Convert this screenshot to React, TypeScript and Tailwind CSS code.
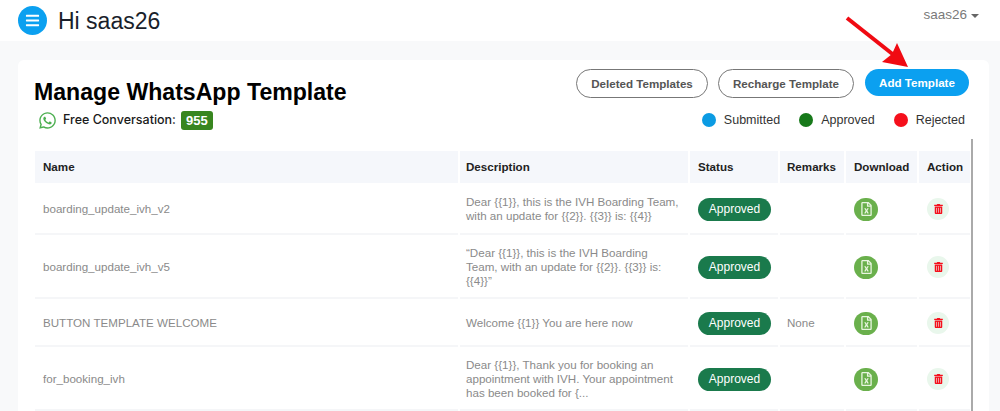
import React from 'react';
import { FaBars, FaRegFileExcel, FaTrashAlt, FaWhatsapp } from 'react-icons/fa';

const rows = [
    {
        name: 'boarding_update_ivh_v2',
        description: 'Dear {{1}}, this is the IVH Boarding Team, with an update for {{2}}. {{3}} is: {{4}}',
        remarks: '',
        height: 'h-[52px]',
    },
    {
        name: 'boarding_update_ivh_v5',
        description: '“Dear {{1}}, this is the IVH Boarding Team, with an update for {{2}}. {{3}} is: {{4}}”',
        remarks: '',
        height: 'h-[64px]',
    },
    {
        name: 'BUTTON TEMPLATE WELCOME',
        description: 'Welcome {{1}} You are here now',
        remarks: 'None',
        height: 'h-[48px]',
    },
    {
        name: 'for_booking_ivh',
        description: 'Dear {{1}}, Thank you for booking an appointment with IVH. Your appointment has been booked for {...',
        remarks: '',
        height: 'h-[64px]',
    },
];

const headers = [
    { label: 'Name', pad: 'px-[8px]' },
    { label: 'Description', pad: 'px-[6px]' },
    { label: 'Status', pad: 'px-[8px]' },
    { label: 'Remarks', pad: 'px-[7px]' },
    { label: 'Download', pad: 'px-[8px]' },
    { label: 'Action', pad: 'px-[8px]' },
];

const App: React.FC = () => {
    return (
        <div className="relative h-[411px] w-[1000px] overflow-hidden bg-[#f8f9fa] font-['Liberation_Sans',Arial,sans-serif]">
            {/* Top bar */}
            <header className="flex h-[41px] items-center justify-between bg-white pl-[18px] pr-[21px]">
                <div className="flex items-center gap-[11px]">
                    <button className="flex h-[29px] w-[29px] items-center justify-center rounded-full bg-[#0ba0f0] text-white">
                        <FaBars className="h-[15px] w-[15px]" />
                    </button>
                    <span className="mt-[1px] text-[23px] leading-none text-[#1a1f2b]">Hi saas26</span>
                </div>
                <div className="-mt-[11px] flex items-center gap-[4px] text-[13.5px] text-[#7a7a7a]">
                    saas26
                    <span className="mt-[1px] h-0 w-0 border-x-[4px] border-t-[4px] border-x-transparent border-t-[#666]" />
                </div>
            </header>

            {/* Card */}
            <main className="ml-[18px] mt-[19px] h-[400px] w-[971px] rounded-[6px] bg-white pl-[17px] pr-[17px]">
                <div className="flex items-start justify-between">
                    <div className="pt-[17px]">
                        <h1 className="-ml-[1px] text-[23.1px] font-bold leading-[30px] text-black">Manage WhatsApp Template</h1>
                        <div className="mt-[4px] flex items-center pl-[4px]">
                            <FaWhatsapp className="-ml-[1px] h-[19px] w-[19px] text-[#4caf50]" />
                            <span className="ml-[6px] font-['Inter',sans-serif] text-[12.5px] font-medium text-[#1a1a1a]">Free Conversation:</span>
                            <span className="ml-[5px] rounded-[3px] bg-[#38861f] px-[5px] py-[2px] text-[13px] font-bold leading-[15px] text-white">955</span>
                        </div>
                    </div>
                    <div className="flex flex-col items-end pr-[3px] pt-[9px]">
                        <div className="flex">
                            <button className="h-[29px] w-[132px] rounded-full border border-[#777] bg-white text-[11.6px] font-bold text-[#555]">Deleted Templates</button>
                            <button className="ml-[10px] h-[29px] w-[136px] rounded-full border border-[#777] bg-white text-[11.6px] font-bold text-[#555]">Recharge Template</button>
                            <button className="ml-[11px] h-[27px] w-[104px] rounded-full bg-[#0ba0f0] text-[11.6px] font-bold text-white">Add Template</button>
                        </div>
                        <div className="mt-[14px] flex items-center pr-[4px] text-[12.5px] leading-[16px] text-[#333]">
                            <span className="h-[14px] w-[14px] rounded-full bg-[#0b9be3]" />
                            <span className="ml-[8px]">Submitted</span>
                            <span className="ml-[19px] h-[14px] w-[14px] rounded-full bg-[#17791a]" />
                            <span className="ml-[8px]">Approved</span>
                            <span className="ml-[19px] h-[14px] w-[14px] rounded-full bg-[#f5101c]" />
                            <span className="ml-[8px]">Rejected</span>
                        </div>
                    </div>
                </div>

                {/* Table with the scrollbar-like rule on its right */}
                <div className="mt-[9px] h-[274px] w-[938px] border-r-2 border-[#aaaaaa] pt-[12px]">
                    <table className="-ml-[2px] w-[937px] table-fixed border-separate border-spacing-x-[2px] border-spacing-y-0 text-[11.6px]">
                        <colgroup>
                            <col className="w-[423px]" />
                            <col className="w-[228px]" />
                            <col className="w-[88px]" />
                            <col className="w-[64px]" />
                            <col className="w-[71px]" />
                            <col className="w-[51px]" />
                        </colgroup>
                        <thead>
                            <tr className="h-[32px]">
                                {headers.map((h) => (
                                    <th key={h.label} className={`bg-[#f5f7fb] text-left font-bold text-[#222] ${h.pad}`}>
                                        {h.label}
                                    </th>
                                ))}
                            </tr>
                        </thead>
                        <tbody>
                            {rows.map((row) => (
                                <tr key={row.name} className={`${row.height} text-[#8a8a8a]`}>
                                    <td className="border-b-2 border-[#f5f6f8] px-[8px] pt-[2px]">{row.name}</td>
                                    <td className="border-b-2 border-[#f5f6f8] pl-[6px] pr-[8px] pt-[2px] leading-[14px]">{row.description}</td>
                                    <td className="border-b-2 border-[#f5f6f8] px-[8px] pt-[2px]">
                                        <span className="flex h-[23px] w-[73px] items-center justify-center rounded-full bg-[#1a7a4c] text-[12px] font-normal text-white">Approved</span>
                                    </td>
                                    <td className="border-b-2 border-[#f5f6f8] px-[7px] pt-[2px]">{row.remarks}</td>
                                    <td className="border-b-2 border-[#f5f6f8] px-[8px] pt-[2px]">
                                        <span className="flex h-[23px] w-[24px] items-center justify-center rounded-full bg-[#6ab04c] text-[#e8f5e0]">
                                            <FaRegFileExcel className="h-[14px] w-[11px]" />
                                        </span>
                                    </td>
                                    <td className="border-b-2 border-[#f5f6f8] px-[8px] pt-[2px]">
                                        <span className="flex h-[22px] w-[22px] items-center justify-center rounded-full bg-[#e9f7ec] text-[#f5101c]">
                                            <FaTrashAlt className="h-[10px] w-[9px]" />
                                        </span>
                                    </td>
                                </tr>
                            ))}
                        </tbody>
                    </table>
                </div>
            </main>

            {/* Red annotation arrow */}
            <svg className="absolute left-[845px] top-[14px]" width="66" height="56" viewBox="0 0 66 56" fill="none">
                <line x1="2" y1="4" x2="50" y2="42" stroke="#f00a12" strokeWidth="4" />
                <polygon points="63,53 37,48 47,40 52,29" fill="#f00a12" />
            </svg>
        </div>
    );
};

export default App;
